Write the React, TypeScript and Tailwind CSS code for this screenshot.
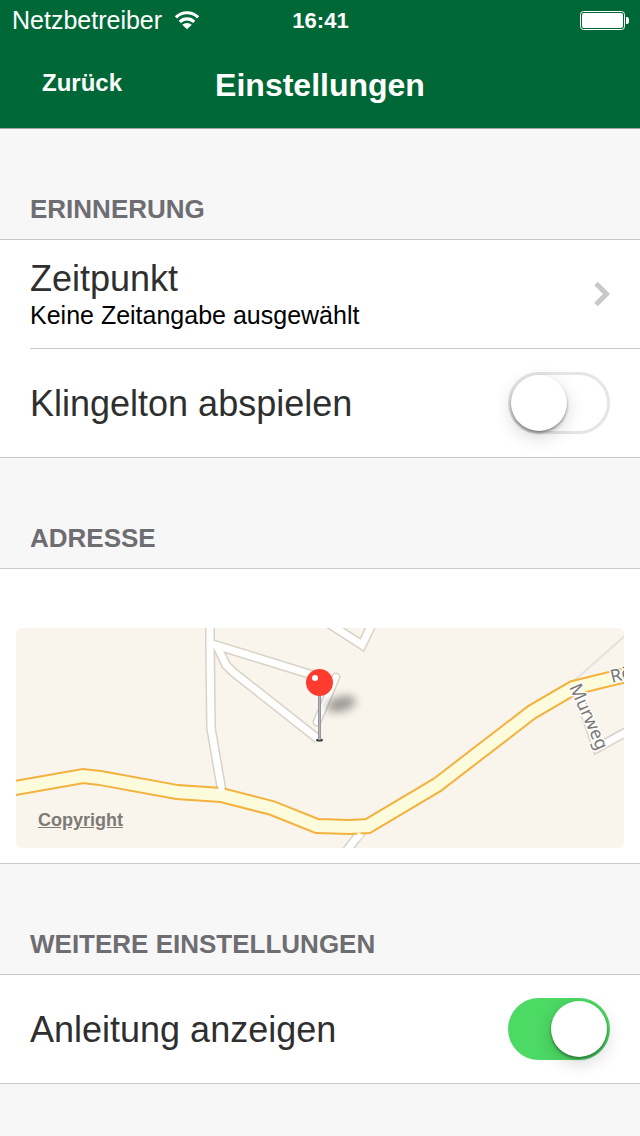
import { useState, type ReactNode } from 'react';

function WifiIcon() {
  return (
    <svg width="26" height="20" viewBox="0 0 26 20" fill="none" stroke="#fff" strokeWidth="3.2" aria-hidden="true">
      <path d="M1.9 7.4a15.6 15.6 0 0 1 22.2 0" />
      <path d="M5.8 11.9a10.2 10.2 0 0 1 14.4 0" />
      <path d="M13 19.2 8.2 14.8a7 7 0 0 1 9.6 0Z" fill="#fff" stroke="none" />
    </svg>
  );
}

function BatteryIcon() {
  return (
    <svg width="49" height="19" viewBox="0 0 49 19" fill="#fff" aria-hidden="true">
      <rect x="0.5" y="0.5" width="44" height="18" rx="3" fill="none" stroke="#fff" />
      <rect x="2" y="2" width="41" height="15" rx="2" />
      <path d="M46 6h.8a2.2 2.2 0 0 1 2.2 2.2v2.6a2.2 2.2 0 0 1-2.2 2.2H46Z" />
    </svg>
  );
}

function Section({ title, children }: { title: string; children: ReactNode }) {
  return (
    <section>
      <h2 className="px-[30px] pt-16 pb-[14px] text-[26px] leading-8 font-bold text-[#6d6d72] uppercase">
        {title}
      </h2>
      <div className="border-y border-[#c8c7cc] bg-white">{children}</div>
    </section>
  );
}

function ToggleRow({ label, defaultOn = false }: { label: string; defaultOn?: boolean }) {
  const [on, setOn] = useState(defaultOn);

  return (
    <label className="flex min-h-[108px] items-center justify-between gap-4 px-[30px]">
      <span className="pt-0.5 text-[36px] leading-10 text-[#2f2f2f]">{label}</span>
      <input
        type="checkbox"
        role="switch"
        checked={on}
        onChange={(e) => setOn(e.target.checked)}
        className="flex h-[62px] w-[102px] shrink-0 appearance-none rounded-full border-[3px] border-[#e5e5e5] bg-white before:size-14 before:rounded-full before:bg-white before:shadow-[0_2px_3px_rgba(0,0,0,0.4),0_6px_18px_rgba(0,0,0,0.16)] checked:justify-end checked:border-[#4cd964] checked:bg-[#4cd964]"
      />
    </label>
  );
}

const roads = [
  'M194-6V15L195 100L206 164',
  'M193 15L303 49',
  'M201 18L210 37L217 44L302 111',
  'M312-5L346 17L357-6',
  'M346 203L328 226',
  'M561 62L581 120L612 103',
];
const lane = 'M320 49L301 94';
const mainRoad =
  'M-6 161L67 148L84 150L161 164L205 167L256 180L301 198L334 199L352 198L421 157L516 84L557 60L614 46';

function AddressMap() {
  return (
    <svg viewBox="0 0 608 220" className="block w-full rounded-md bg-[#f9f4ec]" role="img" aria-label="Karte">
      <defs>
        <filter id="shadow" x="-50%" y="-80%" width="200%" height="260%">
          <feGaussianBlur stdDeviation="5" />
        </filter>
        <filter id="edge">
          <feGaussianBlur stdDeviation="0.7" />
        </filter>
        <linearGradient id="needle">
          <stop offset="0" stopColor="#85878c" />
          <stop offset="0.5" stopColor="#b4b6bb" />
          <stop offset="1" stopColor="#85878c" />
        </linearGradient>
      </defs>
      <path d="M559 52L612 5" stroke="#e4e2df" strokeWidth="2" />
      <g fill="none">
        <g stroke="#d9d2c6" strokeWidth="10" filter="url(#edge)">
          {roads.map((d) => (
            <path key={d} d={d} />
          ))}
          <path d={lane} strokeLinecap="round" strokeWidth="9" />
        </g>
        <g stroke="#fff" strokeWidth="7">
          {roads.map((d) => (
            <path key={d} d={d} />
          ))}
          <path d={lane} strokeLinecap="round" strokeWidth="6" />
        </g>
        <path d={mainRoad} stroke="#f3b13d" strokeWidth="16" filter="url(#edge)" />
        <path d={mainRoad} stroke="#fcfbdc" strokeWidth="12" />
        <path d="M205 158L206 163M345 206L341 211" stroke="#fff" strokeWidth="6" />
      </g>
      <g
        className="font-['Noto_Sans',sans-serif] text-[18px]"
        fill="#77777a"
        stroke="#fffdf8"
        strokeWidth="3"
        paintOrder="stroke"
        strokeLinejoin="round"
      >
        <text transform="translate(553 59) rotate(66)">Murweg</text>
        <text transform="translate(596 55) rotate(-14)">Rö</text>
      </g>
      <ellipse cx="325" cy="76" rx="15" ry="7" fill="#000" opacity="0.4" filter="url(#shadow)" transform="rotate(-14 325 76)" />
      <ellipse cx="303.5" cy="112" rx="3.5" ry="1.6" fill="#3a3a3c" />
      <rect x="302" y="66" width="3" height="46" fill="url(#needle)" />
      <circle cx="303.5" cy="54.5" r="13.5" fill="#ff3b30" />
      <circle cx="299" cy="50" r="3" fill="#fff" />
    </svg>
  );
}

export default function App() {
  return (
    <div className="min-h-screen bg-[#f7f7f7] font-['Liberation_Sans',Arial,sans-serif]">
      <header className="border-b border-[#a2a5a3] bg-[#006837] text-white">
        <div className="grid h-10 grid-cols-[1fr_auto_1fr] items-center pr-[11px] pl-3">
          <div className="flex items-center gap-3">
            <span className="text-[25px] leading-8">Netzbetreiber</span>
            <WifiIcon />
          </div>
          <span className="pt-0.5 text-[22px] leading-8 font-bold">16:41</span>
          <div className="flex justify-end">
            <BatteryIcon />
          </div>
        </div>
        <div className="grid h-[88px] grid-cols-[1fr_auto_1fr] items-center px-[42px] pt-0.5">
          <button type="button" className="justify-self-start pb-1 text-2xl font-bold">
            Zurück
          </button>
          <h1 className="text-[32px] leading-10 font-bold">Einstellungen</h1>
        </div>
      </header>

      <main>
        <Section title="Erinnerung">
          <button type="button" className="flex min-h-[108px] w-full items-center justify-between px-[30px] text-left">
            <span className="flex flex-col pt-0.5">
              <span className="text-[36px] leading-10 text-[#2f2f2f]">Zeitpunkt</span>
              <span className="text-[25px] leading-8 text-black">Keine Zeitangabe ausgewählt</span>
            </span>
            <svg width="16" height="26" viewBox="0 0 16 26" fill="none" stroke="#c7c7cc" strokeWidth="5" aria-hidden="true">
              <path d="M2 2.5 12.5 13 2 23.5" />
            </svg>
          </button>
          <hr className="ml-[30px] border-[#c8c7cc]" />
          <ToggleRow label="Klingelton abspielen" />
        </Section>

        <Section title="Adresse">
          <div className="px-4 pt-[59px] pb-[15px]">
            <div className="relative">
              <AddressMap />
              <a href="#copyright" className="absolute bottom-4 left-[22px] text-lg leading-6 font-bold text-[#7c7a76] underline">
                Copyright
              </a>
            </div>
          </div>
        </Section>

        <Section title="Weitere Einstellungen">
          <ToggleRow label="Anleitung anzeigen" defaultOn />
        </Section>
      </main>
    </div>
  );
}
